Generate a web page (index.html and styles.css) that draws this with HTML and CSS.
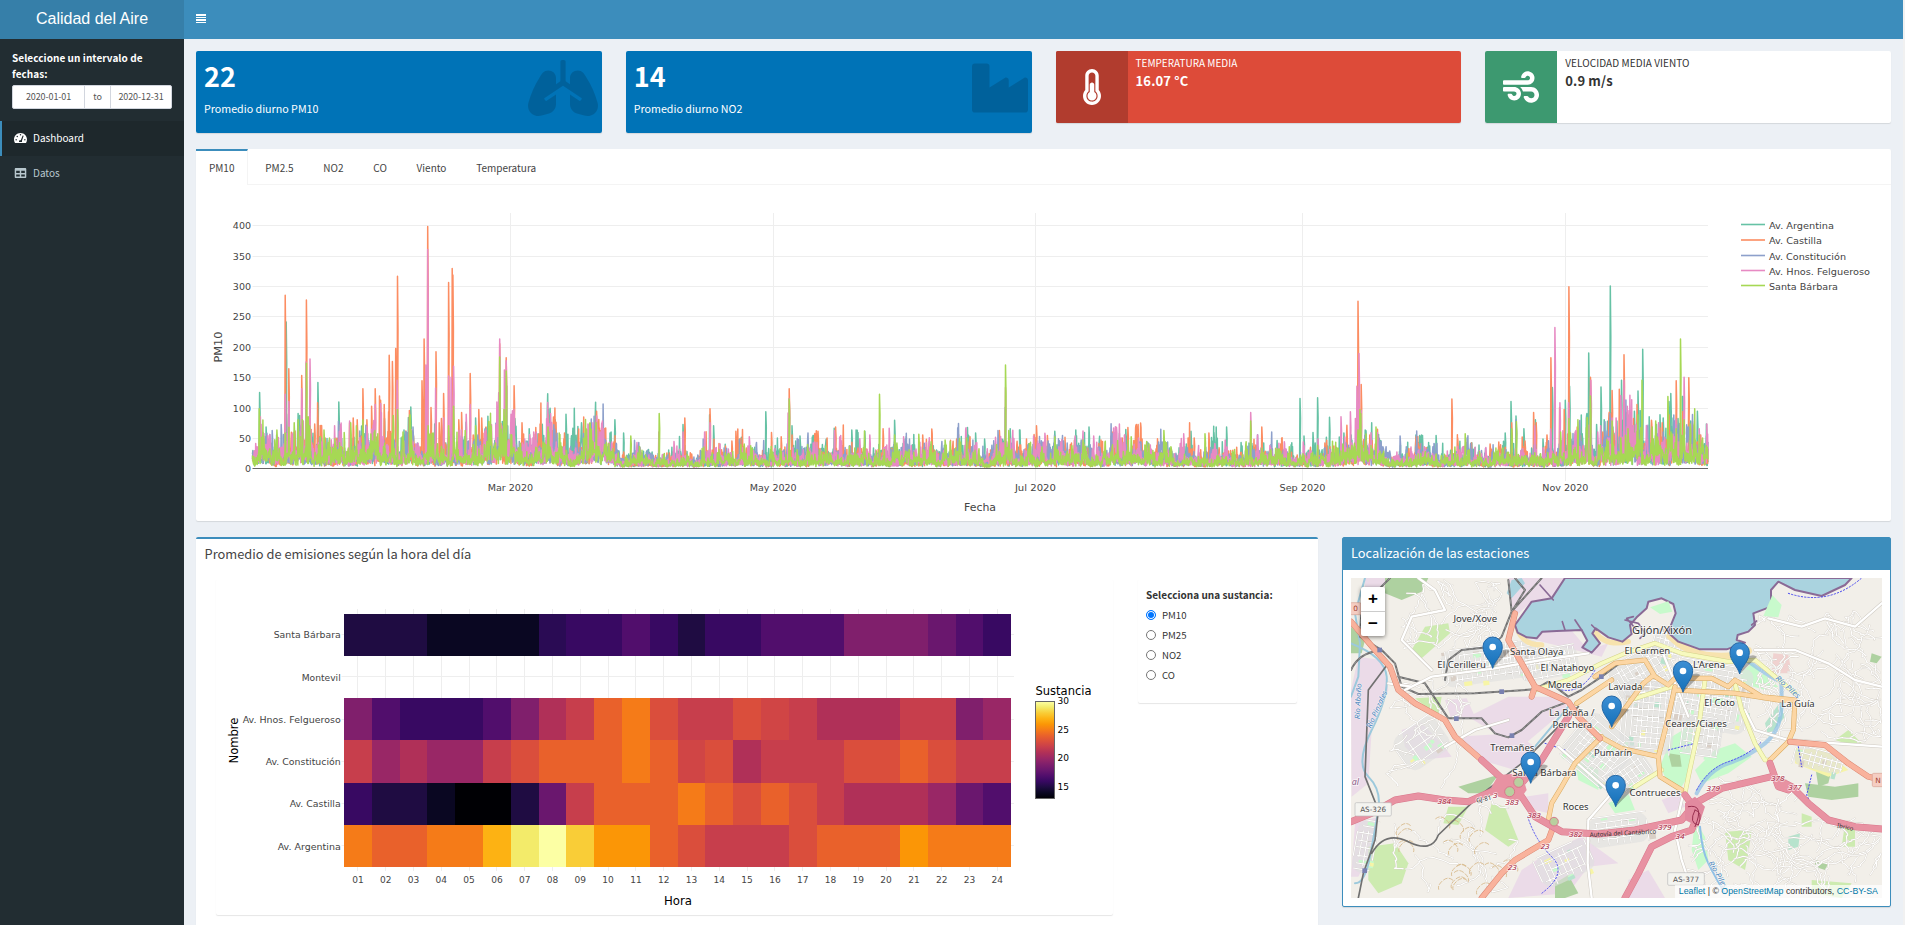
FILE: index.html
```html
<!DOCTYPE html>
<html lang="es">
<head>
<meta charset="utf-8">
<title>Calidad del Aire</title>
<link rel="stylesheet" href="styles.css">
</head>
<body>
<header class="topbar">
  <div class="logo">Calidad del Aire</div>
  <div class="navbar"><span class="burger"><i></i><i></i><i></i><i></i></span></div>
</header>
<div class="wrapper">
  <aside class="sidebar">
    <div class="range">
      <label class="range-label">Seleccione un intervalo de<br>fechas:</label>
      <div class="range-group"><span class="date from">2020-01-01</span><span class="to">to</span><span class="date until">2020-12-31</span></div>
    </div>
    <nav class="menu">
      <a class="item active"><svg class="mi" viewBox="0 0 576 512"><path fill="currentColor" d="M288 32C128.94 32 0 160.94 0 320c0 52.8 14.25 102.26 39.06 144.8 5.61 9.62 16.3 15.2 27.44 15.2h443c11.14 0 21.83-5.58 27.44-15.2C561.75 422.26 576 372.8 576 320c0-159.06-128.94-288-288-288z"/><g fill="#1e282c"><circle cx="288" cy="112" r="32"/><circle cx="96" cy="336" r="32"/><circle cx="480" cy="336" r="32"/><circle cx="144" cy="192" r="32"/><path d="M382 141l46 14-76 228c8 18 6 36-2 49H226c-10-25-4-60 28-75 14-7 30-8 46-4z"/></g></svg><span>Dashboard</span></a>
      <a class="item"><svg class="mi" viewBox="-32 0 576 512"><path fill="currentColor" d="M464 32H48C21.49 32 0 53.49 0 80v352c0 26.51 21.49 48 48 48h416c26.51 0 48-21.49 48-48V80c0-26.51-21.49-48-48-48zM224 416H64v-96h160v96zm0-160H64v-96h160v96zm224 160H288v-96h160v96zm0-160H288v-96h160v96z"/></svg><span>Datos</span></a>
    </nav>
  </aside>
  <main class="content">
    <section class="kpis">
      <div class="small-box">
        <div><h3>22</h3><p>Promedio diurno PM10</p></div>
        <svg class="big lungs" viewBox="0 0 640 512"><path d="M636.11 390.15C614.44 308.85 580.07 231 534.1 159.13 511.98 124.56 498.03 96 454.05 96 415.36 96 384 125.42 384 161.71v60.11l-32.88-21.92a15.996 15.996 0 0 1-7.12-13.31V16c0-8.84-7.16-16-16-16h-16c-8.84 0-16 7.16-16 16v170.59c0 5.35-2.67 10.34-7.12 13.31L256 221.82v-60.11C256 125.42 224.64 96 185.95 96c-43.98 0-57.93 28.56-80.05 63.13C59.93 231 25.56 308.85 3.89 390.15 1.3 399.84 0 409.79 0 419.78c0 61.23 62.48 105.44 125.24 88.62l59.5-15.95c42.18-11.3 71.26-47.47 71.26-88.62v-87.49l-85.84 57.23a7.992 7.992 0 0 1-11.09-2.22l-8.88-13.31a7.992 7.992 0 0 1 2.22-11.09L320 235.23l167.59 111.72a7.994 7.994 0 0 1 2.22 11.09l-8.88 13.31a7.994 7.994 0 0 1-11.09 2.22L384 316.34v87.49c0 41.15 29.08 77.31 71.26 88.62l59.5 15.95C577.52 525.22 640 481.01 640 419.78c0-9.99-1.3-19.94-3.89-29.63z"/></svg>
      </div>
      <div class="small-box">
        <div><h3>14</h3><p>Promedio diurno NO2</p></div>
        <svg class="big factory" viewBox="0 0 512 512"><path d="M475.115 163.781L336 252.309v-68.28c0-18.916-20.931-30.399-36.885-20.248L160 252.309V56c0-13.255-10.745-24-24-24H24C10.745 32 0 42.745 0 56v400c0 13.255 10.745 24 24 24h464c13.255 0 24-10.745 24-24V184.029c0-18.917-20.931-30.399-36.885-20.248z"/></svg>
      </div>
      <div class="info-box red">
        <div class="info-icon"><svg height="36" width="18" viewBox="0 0 256 512"><path fill="#fff" d="M192 384c0 35.346-28.654 64-64 64s-64-28.654-64-64c0-23.685 12.876-44.349 32-55.417V224c0-17.673 14.327-32 32-32s32 14.327 32 32v104.583c19.124 11.068 32 31.732 32 55.417zm32-84.653c19.912 22.563 32 52.194 32 84.653 0 70.696-57.303 128-128 128-.299 0-.609-.001-.909-.003C56.789 511.509-.357 453.636.002 383.333.158 351.054 12.227 321.625 32 299.347V96c0-53.019 42.981-96 96-96s96 42.981 96 96v203.347zM208 384c0-34.339-19.37-52.19-32-66.502V96c0-26.467-21.533-48-48-48S80 69.533 80 96v221.498c-12.732 14.428-31.825 32.1-31.999 66.08-.224 43.876 35.563 80.116 79.423 80.42L128 464c44.112 0 80-35.888 80-80z"/></svg></div>
        <div class="info-text"><span>TEMPERATURA MEDIA</span><b>16.07 °C</b></div>
      </div>
      <div class="info-box white">
        <div class="info-icon"><svg width="36" height="36" viewBox="0 0 512 512"><path fill="#fff" d="M156.7 256H16c-8.8 0-16 7.2-16 16v32c0 8.8 7.2 16 16 16h142.2c15.9 0 30.8 10.9 33.4 26.6 3.3 20-12.1 37.4-31.6 37.4-14.1 0-26.1-9.2-30.4-21.9-2.1-6.3-8.6-10.1-15.2-10.1H81.6c-9.8 0-17.7 8.8-15.9 18.4 8.6 44.1 47.6 77.6 94.2 77.6 57.1 0 102.7-50.1 95.2-108.6C249 291 205.4 256 156.7 256zM16 224h336c59.7 0 106.8-54.8 93.8-116.7-7.6-36.2-36.9-65.5-73.1-73.1-55.4-11.6-105.1 24.9-114.9 75.5-1.9 9.6 6.1 18.3 15.8 18.3h32.8c6.7 0 13.1-3.8 15.2-10.1C325.9 105.2 337.9 96 352 96c19.4 0 34.9 17.4 31.6 37.4-2.6 15.7-17.4 26.6-33.4 26.6H16c-8.8 0-16 7.2-16 16v32c0 8.8 7.2 16 16 16zm384 32H243.7c19.3 16.6 33.2 38.8 39.8 64H400c26.5 0 48 21.5 48 48s-21.5 48-48 48c-17.9 0-33.3-9.9-41.6-24.4-2.9-5-8.7-7.6-14.5-7.6h-33.8c-10.9 0-19 10.8-15.3 21.1 17.8 50.6 70.5 84.8 129.4 72.3 41.2-8.7 75.1-41.6 84.7-82.7C526 321.5 470.5 256 400 256z"/></svg></div>
        <div class="info-text"><span>VELOCIDAD MEDIA VIENTO</span><b>0.9 m/s</b></div>
      </div>
    </section>

    <section class="tabs-card">
      <div class="tabs"><span class="tab on">PM10</span><span class="tab">PM2.5</span><span class="tab">NO2</span><span class="tab">CO</span><span class="tab">Viento</span><span class="tab">Temperatura</span></div>
      <svg class="series" id="series" width="1695" height="336" viewBox="196 185 1695 336"></svg>
    </section>

    <section class="bottom">
      <div class="box heat-box">
        <h4>Promedio de emisiones según la hora del día</h4>
        <div class="heat-row">
          <div class="inner heat-inner"><svg id="heat" width="897" height="335" viewBox="216 579 897 335"></svg></div>
          <div class="inner radios">
            <b>Selecciona una sustancia:</b>
            <label><i class="radio checked"></i>PM10</label>
            <label><i class="radio"></i>PM25</label>
            <label><i class="radio"></i>NO2</label>
            <label><i class="radio"></i>CO</label>
          </div>
        </div>
      </div>
      <div class="box map-box">
        <h4>Localización de las estaciones</h4>
        <div class="map">
          <svg id="map" width="531" height="320" viewBox="48 144 1593 960"></svg>
          <div class="zoomctl"><span>+</span><span>−</span></div>
          <div class="attrib"><a>Leaflet</a> | © <a>OpenStreetMap</a> contributors, <a>CC-BY-SA</a></div>
        </div>
      </div>
    </section>
  </main>
  <div class="scrolltrack"></div>
</div>
<script src="app.js"></script>
</body>
</html>
```

FILE: styles.css
```css
* { box-sizing: border-box; }
body { margin: 0; height: 925px; overflow: hidden; background: #ecf0f5; color: #333; font-family: "Noto Sans CJK SC", "Noto Sans", sans-serif; font-size: 10px; line-height: 16px; }
h3, h4, p { margin: 0; }

.topbar { display: flex; height: 39px; width: 1905px; background: #f1f1f1; }
.logo { width: 184px; background: #367fa9; color: #fff; text-align: center; font: 16px/38px "Liberation Sans", Arial, sans-serif; }
.navbar { width: 1719px; background: #3c8dbc; padding: 14px 12px; }
.burger { display: flex; flex-direction: column; gap: 1px; width: 10px; }
.burger i { height: 1.5px; background: #fff; }

.wrapper { display: flex; height: 886px; width: 1905px; }
.sidebar { width: 184px; background: #222d32; color: #fff; }
.range { padding: 11px 12px 12px; height: 82px; }
.range-label { display: block; font-weight: 700; letter-spacing: .05px; }
.range-group { display: flex; margin-top: 3px; height: 24px; border: 1px solid #d2d6de; border-radius: 2px; background: #fff; color: #555; font-size: 9px; line-height: 22px; text-align: center; letter-spacing: -.1px; }
.date { flex: 1; }
.from { flex: 0 0 71px; }
.to { width: 27px; border: solid #d2d6de; border-width: 0 1px; }
.menu { display: flex; flex-direction: column; }
.item { display: flex; align-items: center; gap: 6px; height: 35px; padding: 0 0 1px 14px; color: #b8c7ce; }
.item.active { background: #1e282c; color: #fff; border-left: 2px solid #3c8dbc; padding-left: 12px; }
.mi { width: 13px; height: 12px; }

.content { width: 1719px; padding: 12px 12px 0; }
.scrolltrack { width: 2px; background: #f1f1f1; }
.kpis { display: grid; grid-template-columns: repeat(4, 1fr); gap: 24px; align-items: start; height: 98px; }
.small-box { display: flex; justify-content: space-between; height: 82px; padding: 8px; border-radius: 2px; background: #0073b7; color: #fff; box-shadow: 0 1px 1px rgba(0,0,0,.1); }
.small-box h3 { font-size: 27px; line-height: 33px; font-weight: 700; }
.small-box p { font-size: 10.7px; line-height: 16px; margin-top: 9px; }
.big { fill: rgba(0,0,0,.15); height: 56px; margin-top: 1px; margin-right: -4px; }
.lungs { width: 70px; }
.factory { width: 56px; }
.info-box { display: flex; height: 72px; border-radius: 2px; overflow: hidden; box-shadow: 0 1px 1px rgba(0,0,0,.1); }
.info-icon { width: 72px; display: flex; align-items: center; justify-content: center; }
.info-text { display: flex; flex-direction: column; padding: 4px 8px; line-height: 16px; }
.info-text b { font-size: 13px; line-height: 20px; letter-spacing: .15px; }
.red { background: #dd4b39; color: #fff; }
.red .info-icon { background: #b13c2e; }
.white { background: #fff; }
.white .info-icon { background: #3d9970; }
.white .info-text { letter-spacing: .08px; }

.tabs-card { height: 372px; background: #fff; border-radius: 2px; box-shadow: 0 1px 1px rgba(0,0,0,.1); }
.tabs { display: flex; height: 36px; border-bottom: 1px solid #f4f4f4; color: #444; }
.tab { padding: 0 12.9px; margin-right: 4px; border-top: 2px solid transparent; line-height: 34px; }
.tab.on { border-top-color: #3c8dbc; border-right: 1px solid #f4f4f4; background: #fff; height: 36px; }
.series { display: block; }

.bottom { display: flex; gap: 24px; margin-top: 16px; align-items: flex-start; }
.box { background: #fff; border-radius: 2px; box-shadow: 0 1px 1px rgba(0,0,0,.1); }
.box h4 { font-weight: 400; font-size: 12.85px; line-height: 16px; }
.heat-box { width: 1122px; height: 400px; border-top: 2px solid #3c8dbc; color: #444; }
.heat-box h4 { padding: 7px 8.5px; }
.heat-row { display: flex; align-items: flex-start; padding: 10px 20px; gap: 25px; }
.inner { border-radius: 2px; box-shadow: 0 1px 1px rgba(0,0,0,.1); }
.heat-inner { width: 897px; height: 336px; }
.heat-inner svg { display: block; }
.radios { width: 159px; height: 124px; padding: 7px 8px; display: flex; flex-direction: column; color: #333; }
.radios b { line-height: 18px; height: 19px; letter-spacing: .03px; }
.radios label { display: flex; align-items: center; gap: 6px; height: 20px; font-size: 9.6px; }
.radio { width: 10px; height: 10px; border: 1px solid #767676; border-radius: 50%; background: #fff; }
.radio.checked { border-color: #0075ff; background: #0075ff; box-shadow: inset 0 0 0 1px #fff; }
.map-box { width: 549px; height: 370px; border: 1px solid #3c8dbc; }
.map-box h4 { height: 32px; padding: 7px 8px; background: #3c8dbc; color: #fff; }
.map { position: relative; margin: 8px; width: 531px; height: 320px; overflow: hidden; }
.map svg { display: block; }
.zoomctl { position: absolute; left: 10px; top: 9px; width: 24px; display: flex; flex-direction: column; background: #fff; border-radius: 2px; box-shadow: 0 1px 4px rgba(0,0,0,.5); color: #000; font: bold 17px/24px "Liberation Sans", Arial, sans-serif; text-align: center; }
.zoomctl span + span { border-top: 1px solid #ccc; }
.attrib { position: absolute; right: 0; bottom: 0; padding: 0 4px; background: rgba(255,255,255,.7); font: 8.8px/13px "Liberation Sans", Arial, sans-serif; color: #333; white-space: nowrap; }
.attrib a { color: #0078a8; }

.ax { font-family: "DejaVu Sans", Verdana, sans-serif; font-size: 9.4px; fill: #444; }
.ax-title { font-family: "DejaVu Sans", Verdana, sans-serif; font-size: 11px; fill: #444; }
.ax-black { font-family: "DejaVu Sans", Verdana, sans-serif; font-size: 11.5px; fill: #000; }
.place { font-family: "Noto Sans", sans-serif; fill: #333; stroke: #fff; stroke-opacity: .7; stroke-width: 5px; paint-order: stroke; }
.exit { font: italic 22px "Noto Sans", sans-serif; fill: #a3203a; stroke: #fff; stroke-width: 4px; stroke-opacity: .7; paint-order: stroke; }
.river { font: italic 22px "Noto Sans", sans-serif; fill: #4a86bd; stroke: #fff; stroke-width: 3px; stroke-opacity: .6; paint-order: stroke; }
.line { fill: none; stroke-linejoin: round; stroke-linecap: round; }
```

FILE: app.js
```js
// Deterministic pseudo random numbers
function rng(seed) {
  return function () {
    seed = (seed + 0x6D2B79F5) | 0;
    var t = Math.imul(seed ^ (seed >>> 15), 1 | seed);
    t = (t + Math.imul(t ^ (t >>> 7), 61 | t)) ^ t;
    return ((t ^ (t >>> 14)) >>> 0) / 4294967296;
  };
}
function text(x, y, s, cls, anchor, len, extra) {
  return '<text x="' + x + '" y="' + y + '" class="' + cls + '" text-anchor="' + (anchor || 'start') + '"' +
    (len ? ' textLength="' + len + '" lengthAdjust="spacingAndGlyphs"' : '') + ' ' + (extra || '') + '>' + s + '</text>';
}
function rect(x, y, w, h, f, extra) {
  return '<rect x="' + x + '" y="' + y + '" width="' + w + '" height="' + h + '" fill="' + f + '" ' + (extra || '') + '/>';
}

/* ---------- PM10 time series ---------- */
(function () {
  var X0 = 252.5, X1 = 1708, Y0 = 468.3, K = 0.6075, out = '';
  for (var v = 0; v <= 400; v += 50) {
    var gy = Math.round(Y0 - v * K) + 0.5;
    if (v) out += rect(X0, gy - 0.5, X1 - X0, 1, '#eee');
    out += text(251, gy + 3.5, v, 'ax', 'end', String(v).length * 6.05);
  }
  [[510.4, 'Mar 2020', 45.5], [773.2, 'May 2020', 47], [1035.4, 'Jul 2020', 41], [1302.5, 'Sep 2020', 46], [1565.3, 'Nov 2020', 46]].forEach(function (m) {
    out += rect(Math.round(m[0] - 0.5), 213, 1, 268, '#eee');
    out += text(m[0], 491, m[1], 'ax', 'middle', m[2]);
  });
  // Peaks: [x, value] for every station
  var stations = [
    ['Av. Argentina', '#66c2a5', 57, 15, 24, [[259.6,125],[266,68],[286,241],[298,90],[317.9,141],[338.9,109],[384.6,82],[404,63],[410.7,101],[475.7,83],[529,65],[550,99],[555,80],[566,89],[615,80],[623.6,58],[683,72],[709.6,88],[713.6,70],[765.7,93],[791.8,70],[800,53],[834,66],[851.8,63],[856,63],[864.6,61],[894.6,79],[975.7,58],[984.6,48],[1010,65],[1020,53],[1054.6,61],[1089,68],[1125.7,64],[1214,59],[1226.4,68],[1299.8,115],[1304,53],[1312.7,59],[1317.5,116],[1329.6,84],[1343.7,58],[1365,63],[1416,55],[1436,54],[1505,58],[1511,110],[1516,86],[1524,65],[1535.5,80],[1543,48],[1552.4,133],[1565.3,112],[1569.6,135],[1582,57],[1587,90],[1588.8,190],[1596.7,72],[1601,134],[1604,80],[1610.4,300],[1621.4,145],[1634.3,94],[1637.8,127],[1640,95],[1642.5,196],[1649,85],[1660,88],[1663,83],[1669,110],[1670.8,123],[1678,82],[1682.5,115],[1690,75],[1697.5,94],[1706.5,73]]],
    ['Av. Castilla', '#fc8d62', 47, 13, 24, [[285,285],[288.6,164],[301.8,153],[306.4,277],[314.6,73],[317.5,108],[325,50],[335.7,50],[349.6,75],[353,83],[357,80],[362.9,131],[366.8,80],[371.4,102],[375,131],[379.3,119],[380.4,112],[384,105],[389,186],[392.5,176],[395.7,197],[397.5,316],[409.3,95],[421.8,144],[424,213],[427.5,398],[431,100],[436,192],[439,75],[441.4,82],[443.6,123],[448.6,306],[452,329],[453,318],[461.4,92],[470,156],[478.6,97],[481.8,83],[486,68],[499.6,205],[506,182],[514,136],[522,75],[548,89],[555.7,70],[564.6,58],[596.4,94],[684.6,83],[710,98],[719,41],[732,45],[735.7,61],[771.4,59],[781,52],[789,131],[791.8,55],[818,61],[835.4,68],[882.9,65],[922.5,55],[956.4,48],[999.3,62],[1036.4,70],[1115,54],[1127.9,67],[1194,50],[1209,58],[1261.8,68],[1357.8,275],[1361,138],[1369.6,55],[1452,114],[1457.5,50],[1490,40],[1511.6,75],[1525,45],[1533.5,92],[1536,75],[1547,55],[1551,182],[1559.4,100],[1564,97],[1568.8,299],[1577,68],[1590.4,150],[1602.5,60],[1612,128],[1619.4,130],[1624,187],[1626,92],[1632.7,60],[1637,105],[1662,75],[1669,88],[1676,144],[1688.8,149],[1700.6,55]]],
    ['Av. Constitución', '#8da0cb', 77, 15, 20, [[272,62],[281,72],[397,100],[413,68],[998,62],[1005,100],[1357,100],[1400,53],[1516,80],[1610,90],[1663,60]]],
    ['Av. Hnos. Felgueroso', '#e78ac3', 102, 14, 22, [[285,122],[288.6,110],[301.8,131],[306,175],[310,180],[331,47],[349.6,78],[375,105],[397,145],[425.7,170],[427.5,360],[435.4,132],[443.6,83],[448.6,152],[451,150],[453.6,168],[466,89],[470,105],[499.6,213],[504.3,162],[506,177],[514,97],[593,75],[596.4,86],[658.6,60],[674,44],[683,60],[704.6,60],[710,75],[787.9,91],[789,115],[834.6,62],[869.6,55],[889.3,66],[903.6,52],[1005.4,133],[1033.6,53],[1093.6,53],[1121,50],[1183.6,57],[1250.7,92],[1257.5,55],[1318,48],[1341,85],[1350.4,93],[1355.5,82],[1356.7,135],[1359,189],[1361,95],[1534.7,70],[1551,60],[1554.7,232],[1559.8,108],[1568.4,108],[1590.8,145],[1597.8,60],[1612,83],[1616,83],[1620.6,120],[1624,145],[1626.5,68],[1637,70],[1658.6,75],[1684,150],[1699,65]]],
    ['Santa Bárbara', '#a6d854', 70, 11, 19, [[259.3,98],[263.6,53],[276.8,63],[285,58],[294,75],[298,80],[302.5,80],[306.4,173],[308,85],[324,63],[344,59],[350.7,75],[356.4,70],[362.9,80],[393,87],[397.5,97],[410,87],[427.9,70],[448.6,70],[453.6,102],[465,62],[475.7,70],[499.6,183],[504,97],[506,160],[548,68],[590,50],[596,75],[630.7,53],[659.3,90],[744,40],[789,114],[879.6,122],[894.6,55],[918.6,56],[966.4,50],[1005.4,170],[1008.6,62],[1054.6,52],[1131,52],[1163.9,62],[1205,57],[1250.7,78],[1317.5,38],[1358,63],[1375.9,68],[1465.3,57],[1511.6,65],[1516.3,77],[1560.6,60],[1569,82],[1577.8,80],[1590.4,119],[1612,78],[1620.6,50],[1628,65],[1642,145],[1655.5,78],[1668,118],[1676,65],[1680.6,213],[1684,80],[1690,73],[1694,73],[1699,55]]]
  ];
  var wr = rng(9), wave = [];
  for (var i = 0; i < 200; i++) wave.push(0.55 + wr() * 0.75);
  function level(x) {
    var p = (x - X0) / 12, k = Math.floor(p), f = p - k;
    var w = wave[k] * (1 - f) + wave[k + 1] * f;
    var season = x < 515 ? 1.4 : x < 620 ? 1.25 : x < 1500 ? 0.95 : x < 1545 ? 1.15 : 1.5;
    [[502, 7, 1.6], [550, 12, 0.9], [596, 10, 1.3], [1005, 6, 1.2], [1130, 10, 1.2], [1358, 9, 1.3]].forEach(function (b) {
      w += b[2] * 0.6 * Math.exp(-Math.pow((x - b[0]) / b[1], 2));
    });
    [[632, 1], [655, 1], [690, 1.2], [440, 0.4]].forEach(function (b) { w -= 0.25 * b[1] * Math.exp(-Math.pow((x - b[0]) / 7, 2)); });
    return Math.max(0.35, w) * season;
  }
  stations.forEach(function (s) {
    var r = rng(s[2]), pts = [], k = 0, day = [], peaks = s[5].slice().sort(function (a, b) { return a[0] - b[0]; });
    for (var i = 0; i < 800; i++) day.push(0.45 + Math.pow(r(), 2) * 1.45);
    for (var x = X0; x < X1; x += 0.36) {
      var q = (x - X0) / 2.4, j = Math.floor(q), d = day[j] + (day[j + 1] - day[j]) * (q - j);
      var n = r(), l = level(x) * d, h = Math.pow(r(), 4);
      var v = s[3] * (0.15 * level(x) + l) * (0.3 + n * 1.1) + h * s[4] * l * 1.1;
      v = Math.max(2, v);
      while (k < peaks.length && peaks[k][0] <= x) {
        pts.push([x - 0.5, v]); pts.push([x - 0.1, peaks[k][1]]); pts.push([x + 0.4, peaks[k][1] * 0.72]); k++;
      }
      pts.push([x, v]);
    }
    out += '<path class="line" stroke="' + s[1] + '" stroke-width="1.5" d="M' + pts.map(function (p) {
      return p[0].toFixed(1) + ' ' + (Y0 - p[1] * K).toFixed(1);
    }).join('L') + '"/>';
  });
  out += rect(X0, 468, X1 - X0, 1, '#666');
  out += text(980, 511, 'Fecha', 'ax-title', 'middle', 32);
  out += '<g transform="translate(221.5 347) rotate(-90)">' + text(0, 0, 'PM10', 'ax-title', 'middle', 31) + '</g>';
  [[224.5, 65], [240, 53], [255.5, 77], [270.5, 101], [285.5, 69]].forEach(function (l, i) {
    out += rect(1741, l[0] - 0.8, 24, 1.6, stations[i][1]);
    out += text(1769, l[0] + 4, stations[i][0], 'ax', 'start', l[1]);
  });
  document.getElementById('series').innerHTML = out;
})();

/* ---------- Hourly heatmap ---------- */
(function () {
  var pal = { 13: '#000004', 14: '#0a0722', 15: '#1f0c42', 15.5: '#2a0b54', 16: '#380962', 17: '#510e6c', 18: '#6a176e', 19: '#801f6c', 20: '#992766', 21: '#b03058', 22: '#c73e4c', 22.5: '#d04545', 23: '#da4e3c', 24: '#e9612b', 25: '#f57b18', 26: '#fb9606', 27: '#fdb213', 28: '#f9cd37', 29: '#f3eb6a', 30: '#fcffa4' };
  var rows = [
    ['Santa Bárbara', 67, [15,15,15,14,14,14,14,15.5,16,16,17,16,15,16,16,17,17,17,19,19,19,18,17,16]],
    ['Montevil', 39, null],
    ['Av. Hnos. Felgueroso', 98, [19,17,16,16,16,17,19,21,22,24,25,23,22,22,23,22.5,22,21,21,21,22,22,19,20]],
    ['Av. Constitución', 75, [22,20,21,20,20,22,23,24,24,24,25,24,22.5,23,21,22,22,22,23,23,24,23,22,22]],
    ['Av. Castilla', 51, [16,15,15,14,13,13,15,18,22,24,24,24,25,24,23,24,23,22,21,21,21,20,18,17]],
    ['Av. Argentina', 63, [25,24,24,25,25,27,29,30,28,26,26,24,23,22,22,22,23,24,24,24,26,25,25,25]]
  ];
  var L = 344, T = 613.6, W = 27.8, H = 42.25, out = '';
  for (var i = 0; i < 24; i++) {
    var cx = L + W * (i + 0.5), s = (i < 9 ? '0' : '') + (i + 1);
    out += rect(Math.round(cx - 0.5), 609, 1, 262, '#eee');
    out += text(cx, 882.5, s, 'ax', 'middle', 11.5);
  }
  rows.forEach(function (r, j) {
    var y = T + H * j;
    out += rect(341.5, Math.round(y + H / 2 - 0.5), 672.5, 1, '#eee');
    out += text(340.7, y + H / 2 + 3.7, r[0], 'ax', 'end', r[1]);
    if (r[2]) r[2].forEach(function (v, i) {
      var x = Math.round(L + W * i), x2 = Math.round(L + W * (i + 1)), ya = Math.round(y), yb = Math.round(y + H);
      out += rect(x, ya, x2 - x, yb - ya, pal[v]);
    });
  });
  out += text(678, 905, 'Hora', 'ax-black', 'middle', 28);
  out += '<g transform="translate(238 740.5) rotate(-90)">' + text(0, 0, 'Nombre', 'ax-black', 'middle', 46) + '</g>';
  out += text(1035.5, 694.5, 'Sustancia', 'ax-black', 'start', 56);
  out += '<defs><linearGradient id="inf" x1="0" y1="1" x2="0" y2="0">';
  for (var v = 13; v <= 30; v++) out += '<stop offset="' + (v - 13) / 17 + '" stop-color="' + pal[v] + '"/>';
  out += '</linearGradient></defs>' + rect(1035.5, 701.5, 19, 97, 'url(#inf)', 'stroke="#666" stroke-width="1"');
  [[30, 701], [25, 729.7], [20, 758], [15, 786.8]].forEach(function (t) {
    out += text(1057.5, t[1] + 3.4, t[0], 'ax', 'start', 11.5, 'style="fill:#000"');
  });
  document.getElementById('heat').innerHTML = out;
})();

/* ---------- Station map ---------- */
(function () {
  var out = rect(48, 144, 1593, 960, '#f2efe9'), r = rng(31);
  function poly(c, p) { out += '<polygon fill="' + c + '" points="' + p + '"/>'; }
  function road(c, w, d, extra) { out += '<path class="line" stroke="' + c + '" stroke-width="' + w + '" d="' + d + '" ' + (extra || '') + '/>'; }
  // Land use
  poly('#ebdbe8', '70,380 140,390 160,480 110,600 100,760 50,800 48,480');
  poly('#ebdbe8', '60,880 130,860 110,960 70,1040 48,1040');
  poly('#ebdbe8', '90,144 160,144 120,200 90,180');
  poly('#ebdbe8', '330,510 395,505 420,560 350,570');
  poly('#ebdbe8', '200,600 260,580 320,640 350,680 250,690 210,650');
  poly('#ebdbe8', '400,560 520,500 700,500 690,540 560,650 480,610');
  poly('#ebdbe8', '360,620 540,610 600,650 540,720 470,700 430,690');
  poly('#ebdbe8', '520,144 690,144 650,205 590,215 540,260 520,190');
  poly('#ebdbe8', '560,300 700,290 760,360 820,340 800,380 720,360 600,330');
  poly('#ebdbe8', '650,960 740,920 850,1000 760,1010 700,1090 520,1104 560,1020');
  poly('#ebdbe8', '570,800 640,790 640,850 600,840');
  poly('#ebdbe8', '980,810 1030,790 1050,830 1000,850');
  poly('#ebdbe8', '880,1050 940,1020 990,1104 880,1104');
  [['#cdebb0', '270,290 340,280 345,310 260,385 230,360'], ['#cdebb0', '240,505 320,500 310,560'], ['#aed1a0', '150,144 280,144 260,185 200,210 150,190'],
   ['#cdebb0', '100,950 180,940 220,1000 200,1060 130,1090 100,1050'], ['#cdebb0', '340,830 400,830 370,885 325,880'], ['#aed1a0', '370,770 470,740 490,735 450,790 400,790'],
   ['#cdebb0', '470,820 510,830 550,930 520,950 450,900'], ['#aed1a0', '660,1060 700,1035 730,1090 690,1104 660,1104'], ['#aed1a0', '48,290 90,330 80,370 48,370'],
   ['#c8facc', '1010,620 1060,590 1090,610 1070,720 1040,770 1000,760 975,710'], ['#c8facc', '1140,660 1200,640 1250,680 1180,730 1100,760 1080,720'],
   ['#c8facc', '1215,430 1250,400 1330,470 1290,480 1220,460'], ['#c8facc', '1080,870 1110,920 1120,990 1090,1020 1070,960'],
   ['#c8facc', '720,690 790,720 790,780 730,750'], ['#c8facc', '820,820 880,790 900,840 840,850'],
   ['#aed1a0', '1000,670 1035,675 1040,710 1010,710'], ['#aed1a0', '1410,760 1500,770 1570,760 1570,800 1490,810 1420,800'], ['#cdebb0', '1170,905 1250,900 1240,970 1230,1020 1180,990'],
   ['#cdebb0', '1500,630 1540,600 1580,640 1530,640'], ['#cdebb0', '1530,880 1560,900 1560,950 1520,950'], ['#cdebb0', '1430,1050 1550,1060 1520,1104 1430,1090'],
   ['#cdebb0', '1400,850 1430,860 1430,890 1400,890'], ['#aed1a0', '1440,990 1480,1000 1470,1020 1440,1010'],
   ['#aed1a0', '1610,370 1640,380 1625,400 1605,395'], ['#f0d2d0', '1315,370 1360,375 1370,430 1310,430'], ['#aed1a0', '1440,705 1460,690 1490,720 1480,760 1450,770'],
   ['#f6f4a8', '1380,655 1470,660 1540,720 1480,740 1380,700'], ['#b7e3cd', '1360,920 1395,910 1390,950 1360,960'], ['#b7e3cd', '1290,580 1340,510 1350,560 1300,620']
  ].forEach(function (p) { poly(p[0], p[1]); });
  // Built-up street grids
  function grid(cx, cy, w, h, a, sx, sy) {
    var g = '';
    for (var x = -w / 2; x < w / 2; x += sx * (0.7 + r() * 0.6)) g += 'M' + x.toFixed(0) + ' ' + (-h / 2 + r() * h * 0.3).toFixed(0) + 'V' + (h / 2 - r() * h * 0.3).toFixed(0);
    for (var y = -h / 2; y < h / 2; y += sy * (0.7 + r() * 0.6)) g += 'M' + (-w / 2 + r() * w * 0.25).toFixed(0) + ' ' + y.toFixed(0) + 'H' + (w / 2 - r() * w * 0.25).toFixed(0);
    var t = 'transform="translate(' + cx + ' ' + cy + ') rotate(' + a + ')"';
    out += '<g ' + t + '>' + rect(-w / 2, -h / 2, w, h, '#e0dfdf', 'opacity=".6" rx="30"');
    for (var i = 0; i < w * h / 2600; i++) out += rect((-w / 2 + r() * w).toFixed(0), (-h / 2 + r() * h).toFixed(0), (8 + r() * 16).toFixed(0), (6 + r() * 16).toFixed(0), ['#c8facc', '#f7f5a6', '#d9cfc6', '#c8facc', '#b7e3cd'][Math.floor(r() * 5)]);
    out += '</g>';
    road('#cfcbc6', 4.4, g, t); road('#fff', 3, g, t);
  }
  grid(470, 400, 300, 110, -8, 13, 22);
  grid(640, 400, 180, 90, -10, 14, 20);
  grid(930, 440, 190, 150, -30, 17, 20);
  grid(940, 560, 160, 220, 5, 15, 17);
  grid(1130, 500, 230, 200, 10, 15, 18);
  grid(1000, 340, 90, 90, 15, 16, 18);
  grid(790, 660, 180, 170, 40, 18, 20);
  grid(880, 740, 150, 90, -35, 16, 18);
  grid(1100, 620, 120, 120, 8, 17, 19);
  grid(690, 1000, 170, 100, -25, 22, 24);
  grid(850, 900, 180, 90, -8, 24, 20);
  grid(260, 640, 150, 120, -35, 34, 36);
  grid(90, 950, 60, 160, 10, 22, 24);
  grid(1450, 690, 150, 60, 15, 20, 18);
  // Country lanes
  function lanes(x0, y0, x1, y1, n) {
    for (var i = 0; i < n; i++) {
      var x = x0 + r() * (x1 - x0), y = y0 + r() * (y1 - y0), a = r() * 6.28, d = 'M' + x.toFixed(0) + ' ' + y.toFixed(0);
      for (var k = 0; k < 7; k++) {
        a += (r() - 0.5) * 1.5;
        var nx = x + Math.cos(a) * 24, ny = y + Math.sin(a) * 24;
        if (nx < x0 || nx > x1 || ny < y0 || ny > y1) { a += 2; continue; }
        d += 'Q' + (x + (r() - 0.5) * 8 + 8).toFixed(0) + ' ' + (y + (r() - 0.5) * 8).toFixed(0) + ' ' + nx.toFixed(0) + ' ' + ny.toFixed(0);
        x = nx; y = ny;
      }
      road('#d3cec6', 5, d); road('#fff', 3.2, d);
    }
  }
  lanes(200, 150, 500, 360, 24);
  lanes(1260, 240, 1640, 640, 56);
  lanes(1050, 860, 1640, 1090, 56);
  lanes(170, 800, 560, 1090, 14);
  lanes(150, 450, 420, 780, 14);
  lanes(1120, 740, 1400, 880, 14);
  for (var i = 0; i < 22; i++) {
    var tx = 190 + r() * 330, ty = 860 + r() * 220, q = r() < 0.5 ? -1 : 1;
    road('#d6b787', 2.5, 'M' + tx.toFixed(0) + ' ' + ty.toFixed(0) + 'q' + (14 * q) + ' -12 ' + (30 * q) + ' 2t' + (12 * q) + ' 26', 'stroke-dasharray="12 6"');
  }
  // Sea, beaches and coast
  var coast = '690,144 650,205 590,215 540,285 548,308 575,322 605,325 622,305 665,303 740,300 757,332 742,352 770,368 795,340 772,310 782,295 820,322 862,335 890,312 885,285 905,262 935,235 940,215 980,205 1015,222 1022,250 1008,285 1000,308 1030,335 1095,358 1175,358 1230,338 1205,330 1208,315 1240,305 1260,285 1255,250 1308,230 1308,180 1330,155 1380,180 1460,198 1530,165 1550,144';
  road('#f7e3ae', 22, 'M1005 318Q1060 372 1130 378T1240 362'); road('#f7e3ae', 16, 'M545 290Q560 345 620 345M780 305Q810 350 880 335');
  out += '<polygon points="' + coast + '" fill="#aad3df" stroke="#8a6a96" stroke-width="6" stroke-linejoin="round"/>';
  poly('#c8facc', '945,232 1000,214 1012,245 975,252');
  poly('#c8facc', '1312,195 1340,225 1330,262 1285,258');
  poly('#aad3df', '530,150 560,144 570,160 530,205 515,190');
  road('#8a6a96', 5, 'M740 300L720 270M690 300l-8 -25M785 300L770 285M905 300l-30 -35 20 -5M1250 285l15 -12M870 270l40 10 20 30 -15 15M655 210l-40 -45');
  road('#9cc9dc', 6, 'M48 340Q150 380 155 440T110 600 100 740 130 840 105 980 60 1060M48 500L70 440 75 340 60 250 90 144M600 650L700 530');
  road('#8fc0e6', 12, 'M1085 790Q1120 720 1180 700T1290 640 1340 520 1335 450 1220 380', 'stroke-opacity=".7"');
  road('#8fc0e6', 6, 'M1095 890Q1100 960 1120 1000T1170 1090');
  road('#4a4af0', 3, 'M1085 780Q1120 715 1180 695T1280 635M1000 660L1080 640M1360 190Q1480 230 1580 144M1390 650l10 60M1430 735l-15 60 15 30M630 640L690 660M578 860Q600 930 650 980T620 1090M680 480Q740 490 780 420', 'stroke-dasharray="4 6"');
  // Railways
  function rail(d) { road('#707070', 6, d); road('#bbb', 1.5, d, 'stroke-dasharray="10 10"'); }
  rail('M165 144L80 230 75 320 140 360 180 400 200 470 250 492 420 490 600 478 640 455 700 500 740 480 800 440 860 395');
  rail('M48 420Q70 370 130 362M190 440L270 460 310 520 340 565 440 565 480 610 520 622 560 600 620 545 700 515');
  rail('M540 144L570 180 530 245 620 144M520 150L530 245 500 320M500 320L470 350 380 360 340 390 330 450');
  road('#707070', 5, 'M160 400L100 480 90 740 130 840 120 930 85 1030 70 1104M110 970Q150 900 220 935T310 915L430 800 560 700 730 530');
  // Secondary and white roads
  function cased(c, edge, w, d) { road(edge, w + 3, d); road(c, w, d); }
  cased('#fff', '#cfcac2', 7, 'M210 480L290 440 480 415 620 390 760 370M250 144L300 180 330 240 230 260 200 330 290 420M330 650L420 600 520 570M670 650L830 790 760 870 758 1000 770 1104M1260 360L1380 360 1480 400 1560 450 1640 470M1230 540L1260 600 1360 630 1640 650M1300 265L1400 290 1470 265 1560 290 1640 220M1045 790L1020 900 1040 990 1060 1050M160 460L230 470M980 360L1060 560');
  cased('#f7fabf', '#d3d38a', 11, 'M600 480L700 450 800 400 870 370 960 340 1040 370 1180 395 1260 390 1380 490M1110 450L1090 600 1060 740 1050 790M1200 460L1220 540 1260 640 1290 690 1305 690M885 510L1010 470M900 770L980 720');
  cased('#fcd6a4', '#d9a85e', 12, 'M725 520L830 450M780 440L840 400 930 390 960 440 1000 465 1020 445 1130 445 1180 470 1200 450 1280 500 1380 510 1375 600 1360 635 1305 690M830 590L925 460 950 440M795 620L860 655 970 680M1020 470L1000 560 970 680 975 740 1040 780M1020 480L1200 490 1330 510 1380 510M800 620L720 700 680 770 650 820 640 870 655 890');
  // Trunk roads
  cased('#f9b29c', '#d98570', 15, 'M48 275L120 360 165 410 190 480 240 520 330 570 360 620 440 690M540 250L520 330 560 400 600 470 700 515 730 560 795 625M600 470L590 500M655 890L640 930 540 990 500 1030 440 1104M1365 635L1470 645 1540 700 1600 740 1640 750');
  cased('#e892a2', '#d9788c', 18, 'M48 875L110 850 180 810 250 798 330 810 400 815 480 780 560 760 620 690 700 560M440 690L500 745 560 800 600 860 680 905 790 912 900 900 1040 870 1080 820 1160 775 1310 740 1370 770 1420 820 1480 870 1560 890 1641 897M1050 795L1090 850 1070 900 1010 920 950 950 910 1030 870 1104M1305 700L1330 770 1360 780');
  poly('#e892a2', '490,735 560,730 575,780 550,815 490,800 470,770');
  out += '<g fill="#b9cf9f" stroke="#d9788c" stroke-width="3"><circle cx="551" cy="757" r="15"/><circle cx="524" cy="785" r="15"/><circle cx="657" cy="875" r="13"/></g>';
  poly('#e28a9f', '1050,820 1080,800 1110,830 1090,890 1050,870');
  road('#993050', 3, 'M1060 830Q1110 820 1080 890M1080 840q-20 40 10 45q15 -40 -10 -45');
  [[134,360],[500,485],[364,566],[531,617],[799,440],[89,1022]].forEach(function (p) { out += rect(p[0] - 7, p[1] - 7, 14, 14, '#7981b0'); });
  // Labels
  [[421,277,'Jove/Xove',131],[605,376,'Santa Olaya',160],[380,413,'El Cerilleru',146],[697,422,'El Natahoyo',161],[690,473,'Moreda',104],[871,480,'Laviada',102],[711,558,'La Braña /',136],[712,594,'Perchera',119],[532,662,'Tremañes',132],[834,678,'Pumarín',114],[628,738,'Santa Bárbara',192],[722,841,'Roces',78],[937,371,'El Carmen',137],[1122,414,'L\'Arena',96],[1154,529,'El Coto',92],[1389,532,'La Guía',100],[1083,592,'Ceares/Ciares',185],[960,797,'Contrueces',153]].forEach(function (l) {
    out += text(l[0], l[1], l[2], 'place', 'middle', l[3], 'font-size="28"');
  });
  out += text(981, 313, 'Gijón/Xixón', 'place', 'middle', 180, 'font-size="32"');
  [[328,822,'384'],[481,805,'3'],[531,826,'383'],[597,863,'383'],[722,920,'382'],[630,956,'23'],[532,1021,'23'],[1135,784,'379'],[1328,752,'378'],[1380,780,'377'],[989,899,'379'],[1035,928,'34']].forEach(function (l) {
    out += text(l[0], l[1], l[2], 'exit', 'middle', l[2].length * 13.5);
  });
  out += '<g transform="translate(764 921) rotate(-3)">' + text(0, 0, 'Autovía del Cantábrico', 'place', 'start', 200, 'font-size="19" style="stroke:none"') + '</g>';
  out += '<g transform="translate(1505 892) rotate(12)">' + text(0, 0, 'Ibrico', 'place', 'start', 50, 'font-size="18" style="stroke:none"') + '</g>';
  out += '<g transform="translate(425 818) rotate(-12)">' + text(0, 0, 'GJ-81', 'place', 'start', 46, 'font-size="19"') + '</g>';
  out += '<g transform="translate(74 568) rotate(-87)">' + text(0, 0, 'Río Aboño', 'river', 'start', 108) + '</g>';
  out += '<g transform="translate(108 596) rotate(-66)">' + text(0, 0, 'Río Pinzales', 'river', 'start', 120) + '</g>';
  out += '<g transform="translate(1320 446) rotate(42)">' + text(0, 0, 'Río Piles', 'river', 'start', 90) + '</g>';
  out += '<g transform="translate(1120 998) rotate(60)">' + text(0, 0, 'Río-Piles', 'river', 'start', 90) + '</g>';
  out += text(50, 764, 'al', 'place', 'start', 22, 'font-size="26" font-style="italic" style="fill:#8d618b"');
  function shield(x, y, w, h, s, c, f) {
    out += rect(x, y, w, h, f, 'rx="4" stroke="' + c + '" stroke-width="2"') + text(x + w / 2, y + h / 2 + 8, s, 'ax', 'middle', s.length > 2 ? 78 : 0, 'style="font-size:22px;fill:' + (s.length > 2 ? '#555' : '#a04030') + '"');
  }
  shield(60, 818, 109, 40, 'AS-326', '#bbb', '#f4f4f0');
  shield(998, 1028, 110, 38, 'AS-377', '#bbb', '#f4f4f0');
  shield(46, 218, 32, 36, '0', '#d6a394', '#f5cdc2');
  shield(1612, 730, 34, 40, 'N', '#d6a394', '#f5cdc2');
  // Station pins
  out += '<defs><linearGradient id="pin" x1="0" y1="0" x2="0" y2="1"><stop offset="0" stop-color="#3d8fd4"/><stop offset="1" stop-color="#1470b8"/></linearGradient></defs>';
  [[473,415],[1214,432],[1044,487],[830,592],[587,760],[842,830]].forEach(function (p) {
    out += '<g transform="translate(' + p + ')"><path d="M0 0L52 -52Q40 -62 22 -50Z" fill="#000" opacity=".28"/>' +
      '<path d="M0 0C-6 -24 -29 -38 -29 -65A29 29 0 0 1 29 -65C29 -38 6 -24 0 0Z" fill="url(#pin)" stroke="#2467a6" stroke-width="3"/><circle cy="-64" r="10" fill="#fff"/></g>';
  });
  document.getElementById('map').innerHTML = out;
})();
```
